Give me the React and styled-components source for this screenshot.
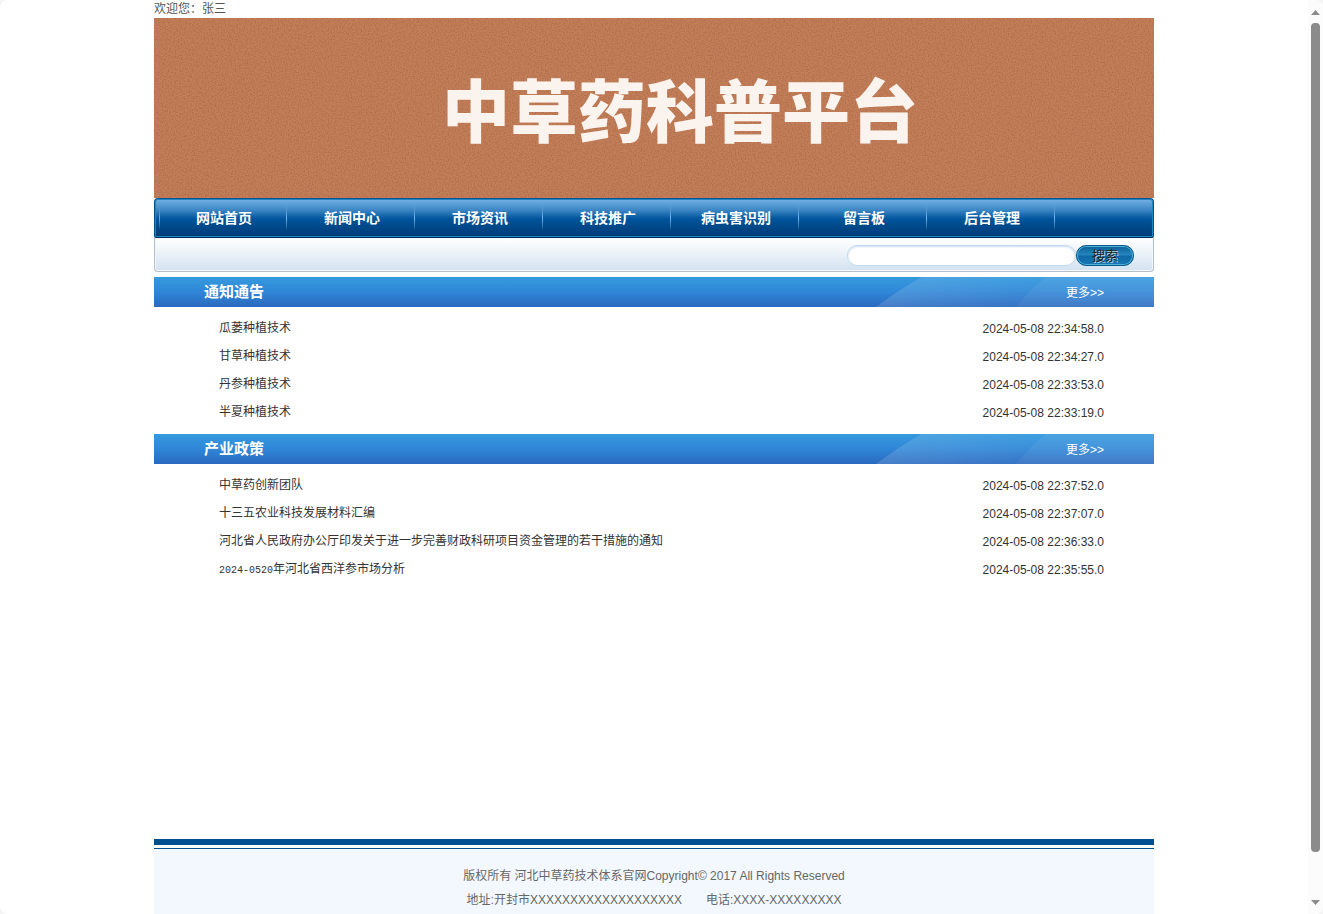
import React, { useState } from 'react'
import styled, { createGlobalStyle } from 'styled-components'


const GlobalStyle = createGlobalStyle`
* {
    box-sizing: border-box;
}
body {
    margin: 0;
    background-color: #f4f4f4;
    color: #333;
    font: 12px "Liberation Sans", "Noto Sans CJK SC", sans-serif;
}
a {
    color: inherit;
    text-decoration: none;
}
`;

const StyledWindow = styled.div`
    display: flex;
    height: 100vh;
    overflow: hidden;
    border-radius: 8px;
    background-color: #fff;
`;

const StyledViewport = styled.div`
    flex: 1;
    min-width: 0;
    overflow: hidden;
`;

const StyledPage = styled.div`
    max-width: 1000px;
    margin: 0 auto;
`;

const StyledWelcome = styled.p`
    margin: 0;
    height: 18px;
    line-height: 18px;
    color: #555;
`;

const StyledBanner = styled.header`
    position: relative;
    display: flex;
    align-items: center;
    justify-content: center;
    height: 180px;
    padding-left: 52px;
    background-color: #c37f59;
`;

const StyledTexture = styled.svg`
    position: absolute;
    inset: 0;
    width: 100%;
    height: 100%;
`;

const StyledBannerTitle = styled.h1`
    position: relative;
    margin: 0;
    color: #fbf3ee;
    font-family: "Noto Sans CJK SC", sans-serif;
    font-size: 68px;
    font-weight: 900;
    line-height: 80px;
`;

const StyledNav = styled.nav`
    display: flex;
    height: 40px;
    padding-left: 4px;
    border: 1px solid #00508c;
    border-bottom-color: #002c58;
    border-radius: 4px 4px 2px 2px;
    background: linear-gradient(#74b3e3, #3f88c6 28%, #00559d 52%, #004a8c 70%, #003b76);
    box-shadow: inset 0 0 0 1px #1c86c4;
    &::before {
        content: "";
        align-self: center;
        width: 1px;
        height: 24px;
        background: linear-gradient(transparent, #6aa9dc, transparent);
    }
`;

const StyledNavLink = styled.a`
    width: 128px;
    line-height: 38px;
    text-align: center;
    color: #fff;
    font-size: 14px;
    font-weight: bold;
    background: linear-gradient(transparent, #7db9e8, transparent) no-repeat 126px 50% / 1px 26px;
`;

const StyledSearchForm = styled.form`
    display: flex;
    align-items: center;
    justify-content: flex-end;
    height: 34px;
    padding: 2px 19px 0 0;
    border: 1px solid #b3bfca;
    border-top: none;
    border-radius: 0 0 4px 4px;
    background: linear-gradient(#fff, #eaf1f8 50%, #d2e1f1);
    box-shadow: inset 0 0 0 1px #f4f8fc;
`;

const StyledSearchInput = styled.input`
    width: 229px;
    height: 21px;
    padding: 0 10px;
    border: 1px solid #c3d8ee;
    border-radius: 10px;
    background-color: #fff;
    box-shadow: inset 0 1px 2px #c9dcf0;
    outline: none;
`;

const StyledSearchButton = styled.button`
    width: 58px;
    height: 21px;
    padding: 0;
    border: 1px solid #0a5a8c;
    border-radius: 10px;
    background: linear-gradient(#0b5f96, #2585bd 45%, #0f69a6 55%, #1878b4);
    box-shadow: inset 0 0 0 1px #4fb0d8;
    color: #222;
    font-family: inherit;
    font-size: 13px;
    line-height: 18px;
    text-shadow: 1px 1px 0 #b9d4e4;
    cursor: pointer;
`;

const StyledMain = styled.main`
    min-height: 567px;
    padding-top: 5px;
`;

const StyledSectionHead = styled.div`
    position: relative;
    display: flex;
    justify-content: space-between;
    height: 30px;
    padding: 0 50px;
    line-height: 32px;
    color: #fff;
    background: linear-gradient(#359ade, #2f86d6 50%, #2a69c0);
`;

const StyledShine = styled.svg`
    position: absolute;
    top: 0;
    right: 0;
    width: 280px;
    height: 30px;
`;

const StyledSectionTitle = styled.h2`
    margin: 0;
    font-size: 15px;
    font-weight: bold;
    line-height: 30px;
`;

const StyledMoreLink = styled.a`
    position: relative;
`;

const StyledList = styled.ul`
    margin: 0;
    padding: 7px 50px 8px 65px;
    list-style: none;
`;

const StyledItem = styled.li`
    display: flex;
    justify-content: space-between;
    height: 28px;
    line-height: 28px;
`;

const StyledDigits = styled.span`
    font-family: "Liberation Mono", monospace;
    font-size: 10px;
`;

const StyledDate = styled.time`
    line-height: 30px;
`;

const StyledFooter = styled.footer`
    border-top: 6px solid #004f8f;
    padding-top: 3px;
`;

const StyledFooterText = styled.div`
    min-height: 90px;
    padding-top: 15px;
    border-top: 1px solid #004f8f;
    background-color: #f3f8fe;
    color: #666;
    line-height: 24px;
    text-align: center;
`;

const StyledContact = styled.div`
    display: flex;
    justify-content: center;
    gap: 24px;
`;

const StyledScrollbar = styled.div`
    display: flex;
    flex-direction: column;
    align-items: center;
    width: 15px;
    padding: 10px 0 9px;
    background-color: #fcfcfc;
`;

const StyledArrow = styled.svg`
    flex: none;
    width: 9px;
    height: 5px;
    fill: #8b8b8b;
`;

const StyledThumb = styled.div`
    flex: 1;
    width: 9px;
    margin: 8px 0 48px;
    border-radius: 4px;
    background-color: #8b8b8b;
`;


const menu = ['网站首页', '新闻中心', '市场资讯', '科技推广', '病虫害识别', '留言板', '后台管理'];

const sections = [
    {
        title: '通知通告',
        items: [
            { title: '瓜蒌种植技术', date: '2024-05-08 22:34:58.0' },
            { title: '甘草种植技术', date: '2024-05-08 22:34:27.0' },
            { title: '丹参种植技术', date: '2024-05-08 22:33:53.0' },
            { title: '半夏种植技术', date: '2024-05-08 22:33:19.0' },
        ],
    },
    {
        title: '产业政策',
        items: [
            { title: '中草药创新团队', date: '2024-05-08 22:37:52.0' },
            { title: '十三五农业科技发展材料汇编', date: '2024-05-08 22:37:07.0' },
            { title: '河北省人民政府办公厅印发关于进一步完善财政科研项目资金管理的若干措施的通知', date: '2024-05-08 22:36:33.0' },
            { number: '2024-0520', title: '年河北省西洋参市场分析', date: '2024-05-08 22:35:55.0' },
        ],
    },
];


function Banner() {
    return (
        <StyledBanner>
            <StyledTexture aria-hidden="true">
                <filter id="leather" colorInterpolationFilters="sRGB">
                    <feTurbulence type="fractalNoise" baseFrequency="0.7" numOctaves="1" seed="4" />
                    <feColorMatrix values="0 0 0 0 0.5  0 0 0 0 0.26  0 0 0 0 0.16  3 0 0 0 -1.2" />
                </filter>
                <rect width="100%" height="100%" filter="url(#leather)" opacity="0.25" />
            </StyledTexture>
            <StyledBannerTitle>中草药科普平台</StyledBannerTitle>
        </StyledBanner>
    );
}

function Section({ title, items }) {
    return (
        <section>
            <StyledSectionHead>
                <StyledShine viewBox="0 0 280 30" aria-hidden="true">
                    <defs>
                        <linearGradient id="shine">
                            <stop offset="0" stopColor="#fff" stopOpacity="0.14" />
                            <stop offset="1" stopColor="#fff" stopOpacity="0.05" />
                        </linearGradient>
                    </defs>
                    <path d="M2 30Q26 12 48 0H172Q156 12 142 30Z" fill="url(#shine)" />
                    <path d="M142 30Q156 12 172 0H280V30Z" fill="#fff" opacity="0.11" />
                </StyledShine>
                <StyledSectionTitle>{title}</StyledSectionTitle>
                <StyledMoreLink href="#">更多&gt;&gt;</StyledMoreLink>
            </StyledSectionHead>
            <StyledList>
                {items.map((item) => (
                    <StyledItem key={item.title}>
                        <a href="#">
                            {item.number && <StyledDigits>{item.number}</StyledDigits>}
                            {item.title}
                        </a>
                        <StyledDate>{item.date}</StyledDate>
                    </StyledItem>
                ))}
            </StyledList>
        </section>
    );
}

function App() {
    const [search, setSearch] = useState('');

    const handleSubmit = (e) => {
        e.preventDefault();
    };

    return (
        <StyledWindow>
            <GlobalStyle />
            <StyledViewport>
                <StyledPage>
                    <StyledWelcome>欢迎您：张三</StyledWelcome>
                    <Banner />
                    <StyledNav>
                        {menu.map((label) => (
                            <StyledNavLink href="#" key={label}>{label}</StyledNavLink>
                        ))}
                    </StyledNav>
                    <StyledSearchForm onSubmit={handleSubmit}>
                        <StyledSearchInput
                            type="text"
                            name="search"
                            aria-label="搜索"
                            value={search}
                            onChange={(e) => setSearch(e.target.value)}
                        />
                        <StyledSearchButton type="submit">搜索</StyledSearchButton>
                    </StyledSearchForm>
                    <StyledMain>
                        {sections.map((section) => (
                            <Section key={section.title} {...section} />
                        ))}
                    </StyledMain>
                    <StyledFooter>
                        <StyledFooterText>
                            <div>版权所有 河北中草药技术体系官网Copyright© 2017 All Rights Reserved</div>
                            <StyledContact>
                                <span>地址:开封市XXXXXXXXXXXXXXXXXXX</span>
                                <span>电话:XXXX-XXXXXXXXX</span>
                            </StyledContact>
                        </StyledFooterText>
                    </StyledFooter>
                </StyledPage>
            </StyledViewport>
            <StyledScrollbar aria-hidden="true">
                <StyledArrow viewBox="0 0 9 5"><path d="M0 5L4.5 0L9 5Z" /></StyledArrow>
                <StyledThumb />
                <StyledArrow viewBox="0 0 9 5"><path d="M0 0L4.5 5L9 0Z" /></StyledArrow>
            </StyledScrollbar>
        </StyledWindow>
    );
}

export default App
